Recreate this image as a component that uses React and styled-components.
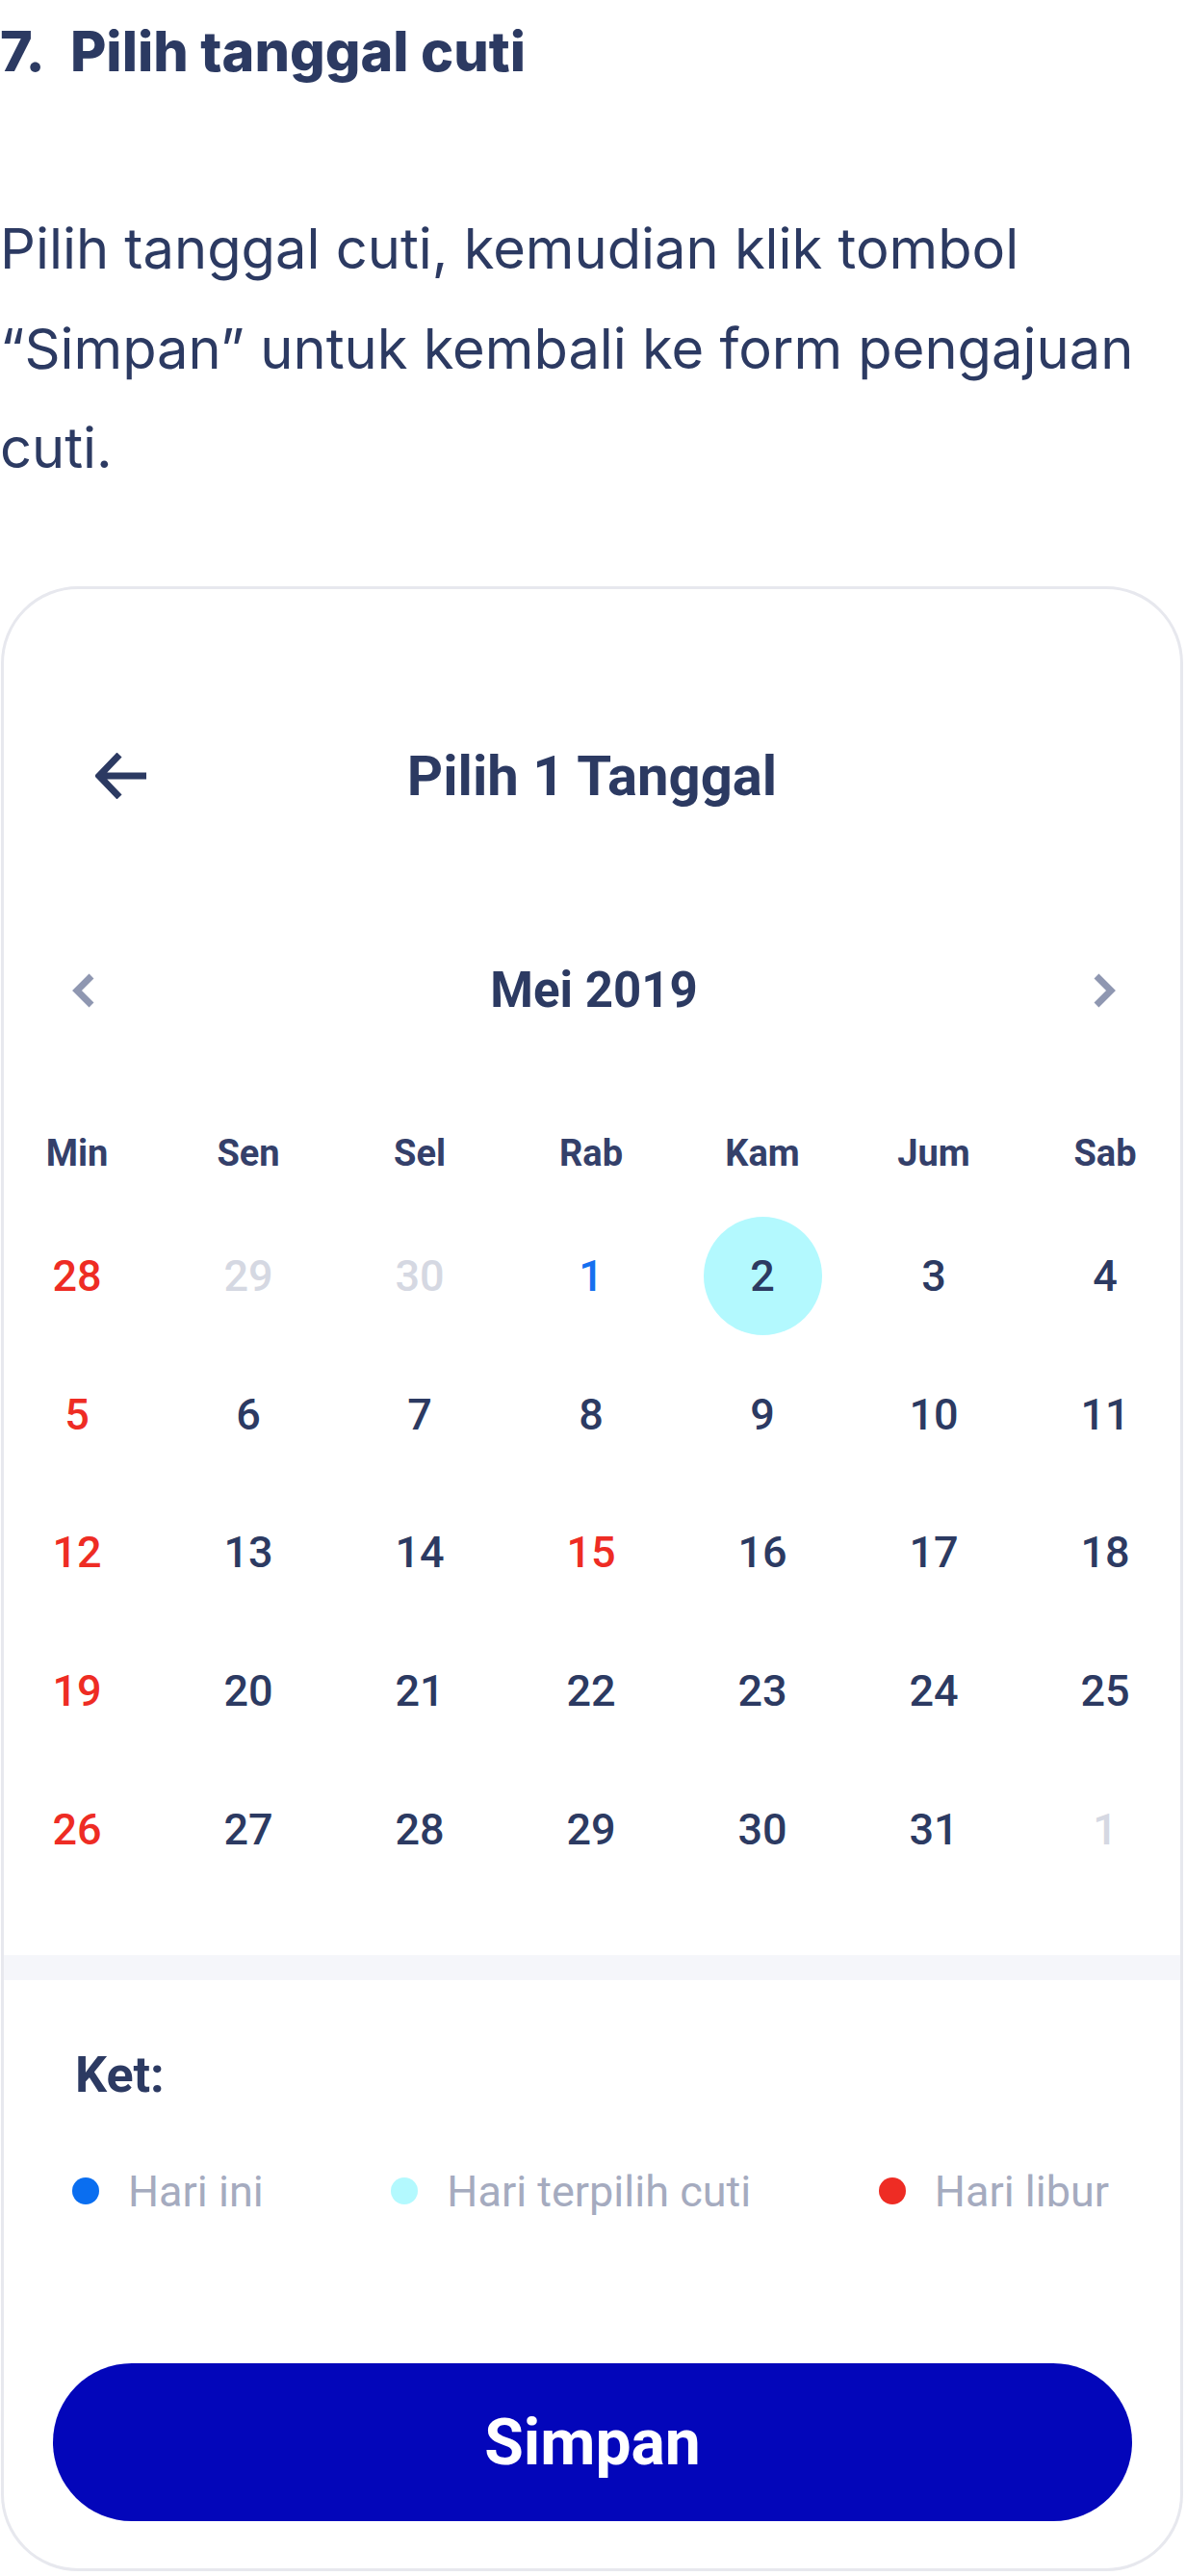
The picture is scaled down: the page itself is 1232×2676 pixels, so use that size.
import React from 'react';
import styled, { createGlobalStyle } from 'styled-components';

const GlobalStyle = createGlobalStyle`
  html, body {
    margin: 0;
    padding: 0;
    background: #ffffff;
  }
  body {
    font-family: Inter, "Liberation Sans", sans-serif;
    color: #2c3a62;
  }
`;

const NAVY = '#2c3a62';

const dayColors = {
  normal: NAVY,
  holiday: '#ee2c24',
  muted: '#d5d8e2',
  today: '#1570ef',
  selected: NAVY,
};

const weekDays = ['Min', 'Sen', 'Sel', 'Rab', 'Kam', 'Jum', 'Sab'];

const weeks = [
  [[28, 'holiday'], [29, 'muted'], [30, 'muted'], [1, 'today'], [2, 'selected'], [3], [4]],
  [[5, 'holiday'], [6], [7], [8], [9], [10], [11]],
  [[12, 'holiday'], [13], [14], [15, 'holiday'], [16], [17], [18]],
  [[19, 'holiday'], [20], [21], [22], [23], [24], [25]],
  [[26, 'holiday'], [27], [28], [29], [30], [31], [1, 'muted']],
];

const legend = [
  { color: '#0a6ef0', label: 'Hari ini' },
  { color: '#b3f9fe', label: 'Hari terpilih cuti' },
  { color: '#ee2c24', label: 'Hari libur' },
];

function BackArrow() {
  return (
    <svg width="55" height="48" viewBox="0 0 55 48" fill="none">
      <path d="M53 24H4M25 2L4 24l21 22" stroke={NAVY} strokeWidth="7" />
    </svg>
  );
}

function Chevron({ dir }) {
  const d = dir === 'left' ? 'M20 3L5 18l15 15' : 'M4 3l15 15L4 33';
  return (
    <svg width="24" height="36" viewBox="0 0 24 36" fill="none">
      <path d={d} stroke="#8f97b1" strokeWidth="7" />
    </svg>
  );
}

function App() {
  return (
    <Page>
      <GlobalStyle />
      <StepTitle>
        <StepNo>7.</StepNo>Pilih tanggal cuti
      </StepTitle>
      <Paragraph>
        Pilih tanggal cuti, kemudian klik tombol “Simpan” untuk kembali ke form pengajuan cuti.
      </Paragraph>

      <Phone>
        <Header>
          <IconSlot>
            <BackArrow />
          </IconSlot>
          <ScreenTitle>Pilih 1 Tanggal</ScreenTitle>
          <span />
        </Header>

        <MonthBar>
          <IconSlot>
            <Chevron dir="left" />
          </IconSlot>
          <MonthName>Mei 2019</MonthName>
          <IconSlot $end>
            <Chevron dir="right" />
          </IconSlot>
        </MonthBar>

        <WeekHead>
          {weekDays.map((w) => (
            <WeekDay key={w}>{w}</WeekDay>
          ))}
        </WeekHead>

        <DayGrid>
          {weeks.flat().map(([num, kind = 'normal'], i) => (
            <DayCell key={i}>
              <DayNum $kind={kind}>{num}</DayNum>
            </DayCell>
          ))}
        </DayGrid>

        <Separator />

        <LegendTitle>Ket:</LegendTitle>
        <LegendRow>
          {legend.map((l) => (
            <LegendItem key={l.label}>
              <Dot $color={l.color} />
              {l.label}
            </LegendItem>
          ))}
        </LegendRow>

        <SaveButton>Simpan</SaveButton>
      </Phone>
    </Page>
  );
}

const Page = styled.div`
  width: 1232px;
  display: flex;
  flex-direction: column;
`;

const StepTitle = styled.h2`
  margin: 21px 0 0;
  font-size: 57.5px;
  line-height: 65px;
  font-weight: 800;
  color: ${NAVY};
`;

const StepNo = styled.span`
  margin-right: 26px;
`;

const Paragraph = styled.p`
  margin: 121px 0 0;
  font-size: 57.8px;
  line-height: 103.5px;
  font-weight: 400;
  color: ${NAVY};
`;

const Phone = styled.div`
  margin: 91px 3px 4px 1px;
  border: 3px solid #e7e8ee;
  border-radius: 80px;
  padding-bottom: 49px;
  display: flex;
  flex-direction: column;
  font-family: Roboto, "Liberation Sans", sans-serif;
`;

const Header = styled.div`
  margin-top: 144px;
  height: 100px;
  padding: 0 95px;
  display: grid;
  grid-template-columns: 1fr auto 1fr;
  align-items: center;
`;

const IconSlot = styled.div`
  display: flex;
  justify-content: ${(p) => (p.$end ? 'flex-end' : 'flex-start')};
  align-items: center;
`;

const ScreenTitle = styled.div`
  font-size: 58px;
  font-weight: 700;
  color: ${NAVY};
`;

const MonthBar = styled.div`
  margin-top: 133px;
  height: 80px;
  padding: 0 67px 0 71px;
  display: grid;
  grid-template-columns: 1fr auto 1fr;
  align-items: center;
`;

const MonthName = styled.div`
  font-size: 51px;
  font-weight: 700;
  color: ${NAVY};
`;

const sevenCols = `
  display: grid;
  grid-template-columns: repeat(7, 124px);
  justify-content: space-between;
  padding: 0 16px 0 14px;
`;

const WeekHead = styled.div`
  ${sevenCols}
  margin-top: 99px;
  height: 60px;
  align-items: center;
`;

const WeekDay = styled.div`
  text-align: center;
  font-size: 38px;
  font-weight: 700;
  color: #34406a;
`;

const DayGrid = styled.div`
  ${sevenCols}
  margin-top: 26px;
  grid-auto-rows: 143.75px;
`;

const DayCell = styled.div`
  display: flex;
  align-items: center;
  justify-content: center;
`;

const DayNum = styled.span`
  width: 123px;
  height: 123px;
  border-radius: 50%;
  display: flex;
  align-items: center;
  justify-content: center;
  font-size: 45px;
  font-weight: 500;
  color: ${(p) => dayColors[p.$kind]};
  background: ${(p) => (p.$kind === 'selected' ? '#b3f9fe' : 'transparent')};
`;

const Separator = styled.div`
  margin-top: 59px;
  height: 26px;
  background: #f5f6fa;
`;

const LegendTitle = styled.div`
  margin-top: 68px;
  padding-left: 74px;
  height: 60px;
  display: flex;
  align-items: center;
  font-size: 52px;
  font-weight: 700;
  color: ${NAVY};
`;

const LegendRow = styled.div`
  margin-top: 66px;
  height: 50px;
  padding: 0 74px 0 71px;
  display: flex;
  justify-content: space-between;
  align-items: center;
`;

const LegendItem = styled.div`
  display: flex;
  align-items: center;
  gap: 30px;
  font-size: 45px;
  font-weight: 400;
  color: #a5abbf;
`;

const Dot = styled.span`
  width: 28px;
  height: 28px;
  border-radius: 50%;
  background: ${(p) => p.$color};
`;

const SaveButton = styled.button`
  margin: 154px 50px 0 51px;
  height: 164px;
  border: none;
  border-radius: 82px;
  background: #0306ba;
  color: #ffffff;
  font-family: Roboto, "Liberation Sans", sans-serif;
  font-size: 66px;
  font-weight: 700;
`;

export default App;
